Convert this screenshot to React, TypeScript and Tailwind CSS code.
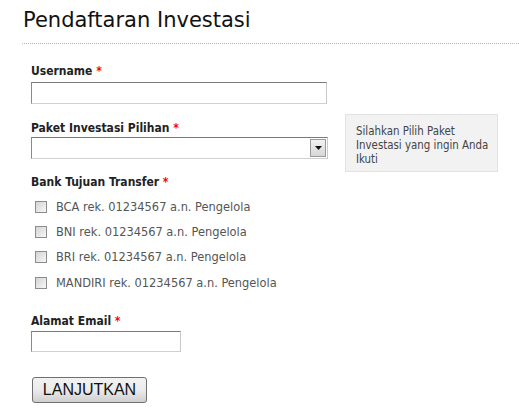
import React from 'react';

const banks = ['BCA', 'BNI', 'BRI', 'MANDIRI'];

function Req() {
  return <span className="text-[#ff0000]"> *</span>;
}

function Box() {
  return (
    <span className="block h-[12px] w-[12px] border border-[#8c8c8c] bg-gradient-to-br from-[#d4d4d4] to-[#f7f7f7]" />
  );
}

export default function App() {
  return (
    <div className="min-h-screen bg-white font-['DejaVu_Sans_Condensed','DejaVu_Sans',sans-serif] text-[#222]">
      <h1 className="pl-[23px] pt-[8px] font-['DejaVu_Sans',sans-serif] text-[21px] leading-[24px] text-[#111]">
        Pendaftaran Investasi
      </h1>
      <div className="ml-[22px] mt-[11px] border-b border-dotted border-[#b5b5b5]" />

      <form className="pl-[31px]" onSubmit={(e) => e.preventDefault()}>
        {/* username */}
        <label className="mt-[20px] block text-[12px] font-bold leading-[14px]">
          Username<Req />
        </label>
        <input
          type="text"
          className="mt-[4px] block h-[22px] w-[296px] border border-t-[#7a7a7a] border-l-[#8a8a8a] border-r-[#c8c8c8] border-b-[#d0d0d0] bg-white outline-none"
        />

        {/* paket */}
        <div className="mt-[10px] flex items-start">
          <div className="w-[297px] pt-[7px]">
            <label className="block text-[12px] font-bold leading-[14px]">
              Paket Investasi Pilihan<Req />
            </label>
            <div className="mt-[2px] flex h-[22px] w-[297px] border border-t-[#7a7a7a] border-l-[#8a8a8a] border-r-[#c8c8c8] border-b-[#d0d0d0] bg-white">
              <div className="flex-1" />
              <div className="m-px flex w-[16px] items-center justify-center border border-[#9a9a9a] bg-gradient-to-b from-[#f2f2f2] to-[#d6d6d6]">
                <svg width="7" height="4" viewBox="0 0 7 4">
                  <path d="M0 0h7L3.5 4z" fill="#111" />
                </svg>
              </div>
            </div>
          </div>
          <div className="mb-[-13px] ml-[17px] h-[58px] w-[153px] border border-[#e2e2e2] bg-[#f2f2f2] pl-[10px] pt-[9px] text-[11.4px] leading-[14px] whitespace-nowrap text-[#444]">
            Silahkan Pilih Paket
            <br />
            Investasi yang ingin Anda
            <br />
            Ikuti
          </div>
        </div>

        {/* bank */}
        <label className="mt-[16px] block text-[12px] font-bold leading-[14px]">
          Bank Tujuan Transfer<Req />
        </label>
        <div className="mt-[5px] flex flex-col pl-[4px]">
          {banks.map((b, i) => (
            <label key={b} className={`flex items-center gap-[9px] text-[12.7px] text-[#555] ${i === 3 ? 'h-[27px]' : 'h-[25px]'}`}>
              <Box />
              {b} rek. 01234567 a.n. Pengelola
            </label>
          ))}
        </div>

        {/* email */}
        <label className="mt-[18px] block text-[12px] font-bold leading-[14px]">
          Alamat Email<Req />
        </label>
        <input
          type="text"
          className="mt-[3px] block h-[21px] w-[150px] border border-t-[#7a7a7a] border-l-[#8a8a8a] border-r-[#c8c8c8] border-b-[#d0d0d0] bg-white outline-none"
        />

        <button
          type="submit"
          className="mt-[25px] ml-px flex h-[26px] w-[115px] items-center justify-center rounded-[3px] border border-[#707070] bg-gradient-to-b from-[#f2f2f2] via-[#ebebeb] to-[#cfcfcf] font-['Liberation_Sans',Arial,sans-serif] text-[16px] text-[#111]"
        >
          LANJUTKAN
        </button>
      </form>
    </div>
  );
}
